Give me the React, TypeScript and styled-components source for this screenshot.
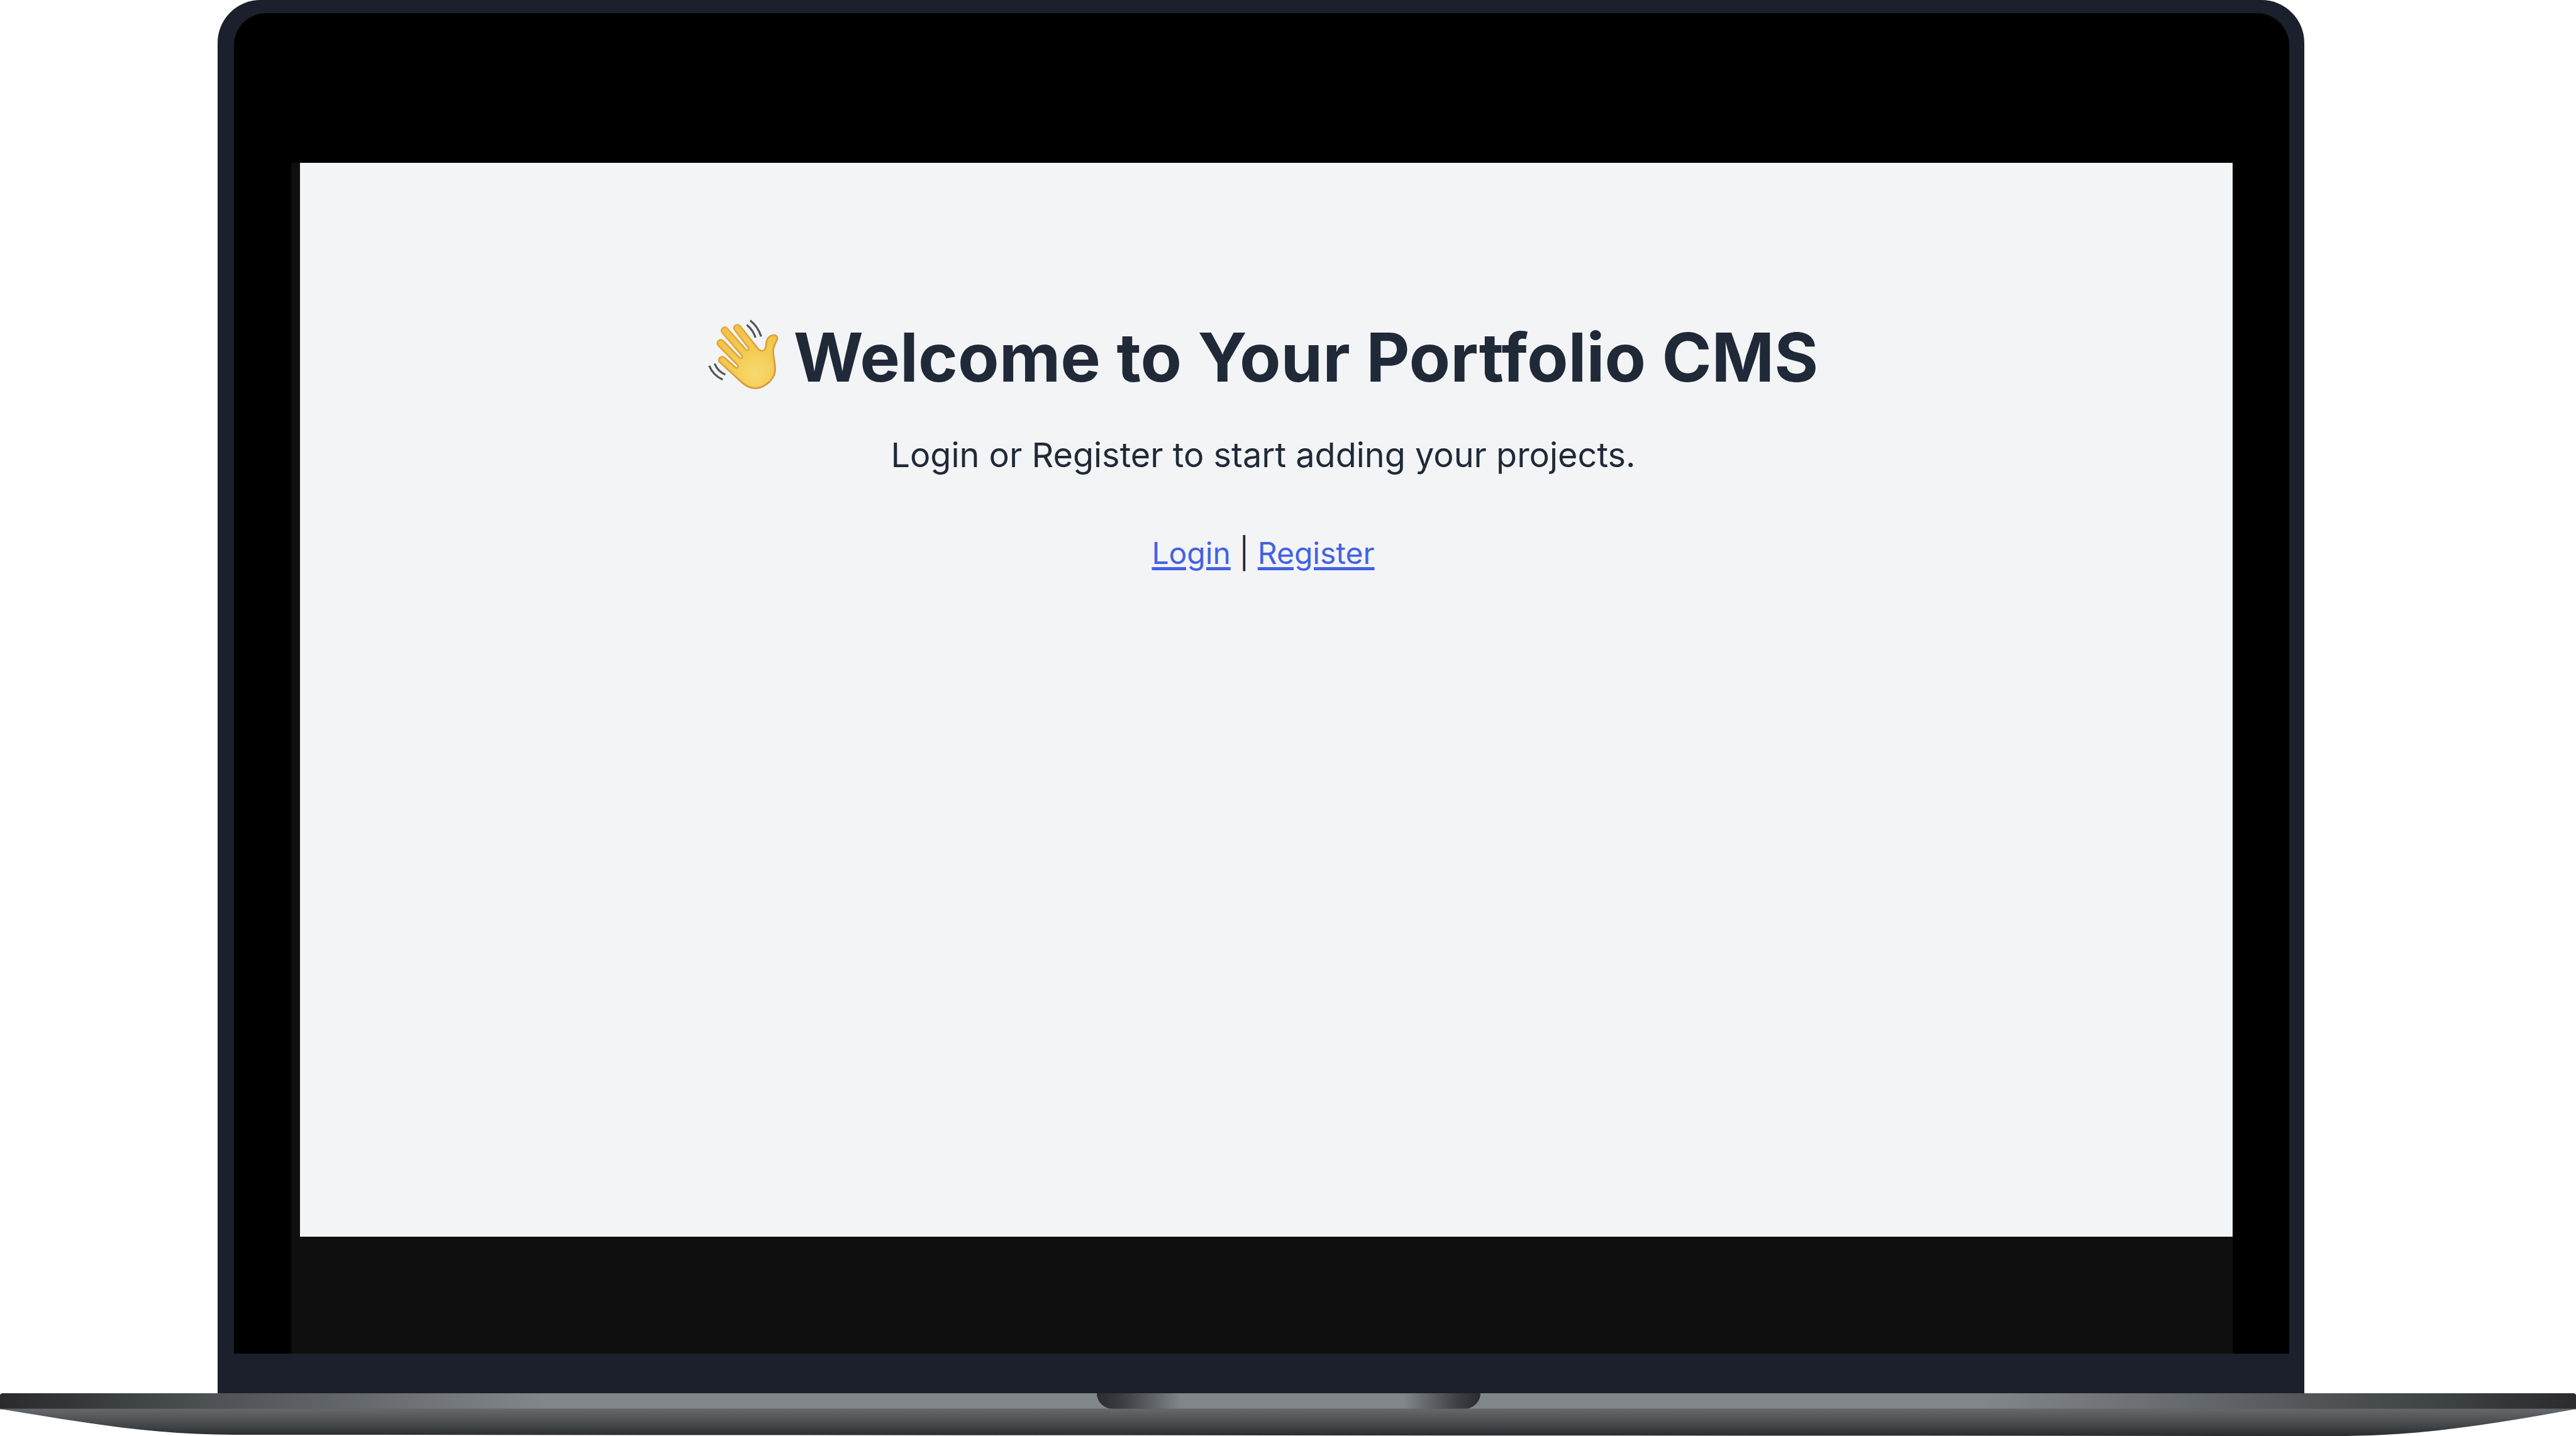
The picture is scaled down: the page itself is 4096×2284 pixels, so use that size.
import React from "react";
import styled, { createGlobalStyle } from "styled-components";

const GlobalStyle = createGlobalStyle`
  * { box-sizing: border-box; }
  body { margin: 0; background: #ffffff; font-family: Inter, "Liberation Sans", sans-serif; }
`;

const Laptop = styled.div`
  display: flex;
  flex-direction: column;
  min-height: 100vh;
`;

const Lid = styled.div`
  flex: 1;
  display: flex;
  margin: 0 432px 0 346px;
  padding: 21px 24px 63px 26px;
  background: #1b202c;
  border-radius: 68px 68px 0 0;
`;

const Screen = styled.div`
  flex: 1;
  display: flex;
  padding: 238px 90px 0 91px;
  background: #000000;
  border-radius: 51px 51px 0 0;
`;

const Backdrop = styled.div`
  flex: 1;
  display: flex;
  padding: 0 0 186px 14px;
  background: #0f0f0f;
`;

const Page = styled.main`
  flex: 1;
  display: flex;
  flex-direction: column;
  align-items: center;
  padding: 243px 10px 0 0;
  background: #f3f4f6;
  color: #1f2937;
`;

const Title = styled.h1`
  display: flex;
  align-items: center;
  gap: 24px;
  margin: 0;
  font-size: 107px;
  line-height: 132px;
  font-weight: 700;
  white-space: nowrap;
`;

const Lead = styled.p`
  margin: 48px 0 0;
  font-size: 54px;
  line-height: 84px;
`;

const Nav = styled.nav`
  margin-top: 78px;
  font-size: 48px;
  line-height: 72px;
`;

const NavLink = styled.a`
  color: #4361e4;
  text-decoration: underline;
  text-decoration-thickness: 5px;
  text-underline-offset: 5px;
`;

const BaseDrawing = styled.svg`
  display: block;
  width: 100%;
  height: 68px;
`;

const WaveIcon = styled.svg`
  width: 112px;
  height: 120px;
`;

const handOutline =
  "M83 238L190 336Q228 370 264 370C315 368 364 318 364 278C366 240 354 205 355 180Q357 158 372 132Q380 116 371 106Q362 98 350 100C325 104 314 124 313 148Q312 172 300 177Q288 180 276 164L189 54A21 21 0 0 0 155 76L226 168Q228 176 220 174L128 68A20 20 0 0 0 97 94L195 207Q196 216 188 213L108 130A20 20 0 0 0 77 157L174 255Q178 263 168 261L112 211A20 20 0 0 0 83 238Z";

function WavingHand() {
  return (
    <WaveIcon viewBox="30 26 348 372" role="img" aria-label="Waving hand">
      <defs>
        <radialGradient id="skin" gradientUnits="userSpaceOnUse" cx="262" cy="290" r="250">
          <stop offset="0" stopColor="#f8d970" />
          <stop offset="0.45" stopColor="#f4cb52" />
          <stop offset="1" stopColor="#f3c349" />
        </radialGradient>
        <linearGradient id="rim" x1="0" y1="0" x2="0.6" y2="1">
          <stop offset="0" stopColor="#e3a53a" />
          <stop offset="1" stopColor="#c67a22" />
        </linearGradient>
        <filter id="soften" x="-10%" y="-10%" width="120%" height="120%">
          <feGaussianBlur stdDeviation="4" />
        </filter>
        <clipPath id="handShape">
          <path d={handOutline} />
        </clipPath>
      </defs>
      <path d={handOutline} fill="url(#skin)" />
      <g clipPath="url(#handShape)">
        <path d={handOutline} fill="none" stroke="url(#rim)" strokeWidth="11" filter="url(#soften)" />
      </g>
      <g fill="none" stroke="#555555" strokeWidth="10">
        <path d="M238 31Q275 60 292 110" />
        <path d="M221 53Q252 78 264 116" />
        <path d="M35 254Q55 302 102 323" />
        <path d="M62 244Q78 284 115 298" />
      </g>
    </WaveIcon>
  );
}

function Base() {
  return (
    <BaseDrawing viewBox="0 0 4096 68" preserveAspectRatio="none" aria-hidden="true">
      <defs>
        <linearGradient id="lip">
          <stop offset="0" stopColor="#2b2b2e" />
          <stop offset="0.03" stopColor="#36373a" />
          <stop offset="0.045" stopColor="#3b4042" />
          <stop offset="0.085" stopColor="#4f5356" />
          <stop offset="0.14" stopColor="#65696b" />
          <stop offset="0.21" stopColor="#818689" />
          <stop offset="0.77" stopColor="#818689" />
          <stop offset="0.85" stopColor="#65696b" />
          <stop offset="0.91" stopColor="#4c5053" />
          <stop offset="0.955" stopColor="#3b4042" />
          <stop offset="0.97" stopColor="#36373a" />
          <stop offset="1" stopColor="#2b2b2e" />
        </linearGradient>
        <linearGradient id="notch">
          <stop offset="0" stopColor="#2b2b2e" />
          <stop offset="0.07" stopColor="#3c4042" />
          <stop offset="0.22" stopColor="#818689" />
          <stop offset="0.8" stopColor="#818689" />
          <stop offset="0.94" stopColor="#3c4042" />
          <stop offset="1" stopColor="#2b2b2e" />
        </linearGradient>
        <linearGradient id="underside" x1="0" y1="0" x2="0" y2="1">
          <stop offset="0" stopColor="#65696c" />
          <stop offset="0.65" stopColor="#404446" />
          <stop offset="1" stopColor="#2b2b2e" />
        </linearGradient>
      </defs>
      <path d="M0 25C130 46 240 66 370 66L3730 68C3860 67 3980 46 4096 25Z" fill="url(#underside)" />
      <path d="M4 0H4092Q4096 0 4096 4V25H0V4Q0 0 4 0Z" fill="url(#lip)" />
      <path d="M1744 0H2354C2354 14 2342 25 2328 25H1770C1756 25 1744 14 1744 0Z" fill="url(#notch)" />
      <path d="M0 25H4096" stroke="#5f6366" />
    </BaseDrawing>
  );
}

export default function App() {
  return (
    <>
      <GlobalStyle />
      <Laptop>
        <Lid>
          <Screen>
            <Backdrop>
              <Page>
                <Title>
                  <WavingHand />
                  Welcome to Your Portfolio CMS
                </Title>
                <Lead>Login or Register to start adding your projects.</Lead>
                <Nav>
                  <NavLink href="#login">Login</NavLink> | <NavLink href="#register">Register</NavLink>
                </Nav>
              </Page>
            </Backdrop>
          </Screen>
        </Lid>
        <Base />
      </Laptop>
    </>
  );
}
